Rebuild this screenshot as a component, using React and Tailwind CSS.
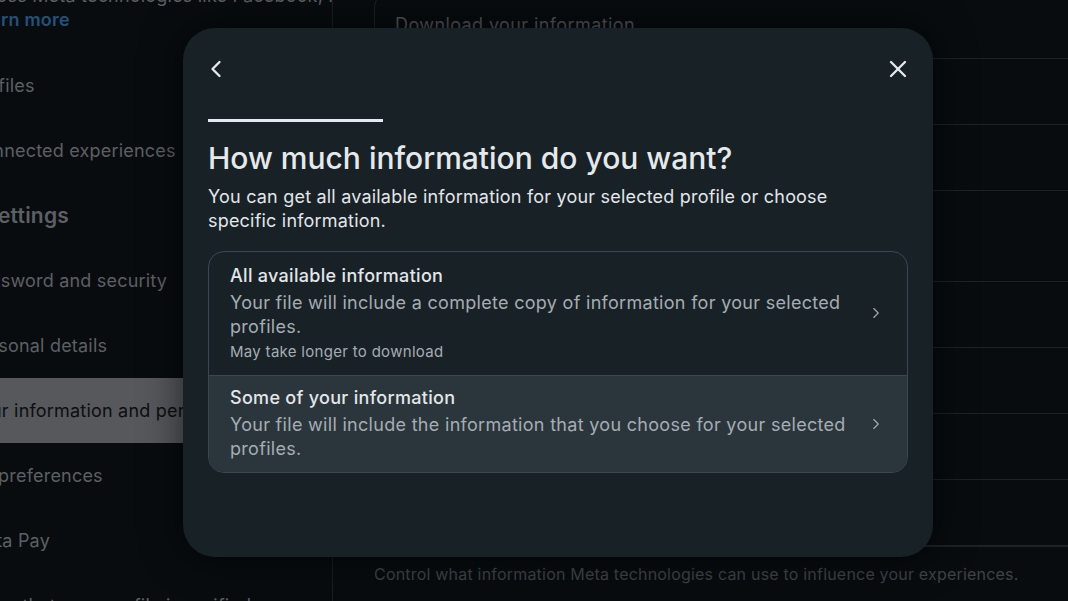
import { ChevronLeft, ChevronRight, X } from "lucide-react";

const sideItems = [
  { label: "Profiles" },
  { label: "Connected experiences" },
  { label: "Account settings", heading: true },
  { label: "Password and security" },
  { label: "Personal details" },
  { label: "Your information and permissions", active: true },
  { label: "Ad preferences" },
  { label: "Meta Pay" },
  { label: "Show that your profile is verified" },
];

const rowHeights = ["h-[66px]", "h-[66px]", "h-[91px]", "h-[66px]", "h-[66px]", "h-[66px]", "h-[66px]"];

function Sidebar() {
  return (
    <aside className="w-[333px] shrink-0 h-full overflow-hidden border-r border-[#1a1e21]">
      <div className="-ml-[31px] -mt-[16px] tracking-[0.2px]">
        <p className="text-[18px] leading-[24px] text-[#5c6064] whitespace-nowrap">
          across Meta technologies like Facebook, Instagram and Meta
        </p>
        <p className="text-[18px] leading-[24px] font-semibold text-[#24517a]">Learn more</p>
        <ul className="mt-[21px]">
          {sideItems.map((item) => (
            <li
              key={item.label}
              className={`h-[65px] flex items-center whitespace-nowrap ${
                item.active ? "bg-[#56585c] text-[#0c0e10]" : "text-[#5c6064]"
              } ${item.heading ? "-ml-[75px] text-[21px] font-semibold" : "text-[18px]"}`}
            >
              {item.label}
            </li>
          ))}
        </ul>
      </div>
    </aside>
  );
}

function BackgroundPanel() {
  return (
    <main className="flex-1 h-full overflow-hidden pl-[41px] flex flex-col">
      <div className="-mt-[10px] -mr-[40px] rounded-tl-[18px] border border-[#1d2226]">
        <div className="h-[68px] flex items-end pb-[20px] pl-[20px] text-[18px] tracking-[0.4px] text-[#50555a] border-b border-[#1d2226]">
          Download your information
        </div>
        {rowHeights.map((h, i) => (
          <div key={i} className={`${h} border-b border-[#1d2226]`} />
        ))}
      </div>
      <p className="mt-[15px] text-[16px] tracking-[0.2px] text-[#3e4347] whitespace-nowrap">
        Control what information Meta technologies can use to influence your experiences.
      </p>
    </main>
  );
}

function Option({ title, desc, note, shaded }) {
  return (
    <button
      className={`w-full flex items-center text-left pl-[21px] pr-[22px] tracking-[0.3px] ${
        shaded ? "bg-[#2b363c] pt-[10px] pb-[11px]" : "pt-[12px] pb-[13px]"
      }`}
    >
      <div className="flex-1">
        <div className="text-[18px] leading-[24px] font-medium text-[#e3e6ea]">{title}</div>
        <div className="mt-[3px] text-[18px] leading-[24px] text-[#a5adb3]">{desc}</div>
        {note && <div className="mt-[3px] text-[15px] leading-[20px] text-[#a5adb3]">{note}</div>}
      </div>
      <ChevronRight size={18} strokeWidth={1.5} className="text-[#a5adb3] ml-[16px] shrink-0" />
    </button>
  );
}

function Modal() {
  return (
    <div className="absolute left-[183px] top-[28px] w-[750px] h-[529px] rounded-[32px] bg-[#182126] shadow-[0_0_40px_rgba(0,0,0,0.6)] px-[25px]">
      <div className="flex items-center justify-between pt-[16px] h-[66px]">
        <ChevronLeft size={28} strokeWidth={2} className="text-[#e6e9ec] -ml-[6px]" />
        <X size={28} strokeWidth={2} className="text-[#e6e9ec] -mr-[4px]" />
      </div>
      <div className="mt-[25px] h-[3px] w-[175px] bg-[#e6e9ec]" />
      <h2 className="mt-[19px] text-[30px] leading-[34px] font-medium text-[#e6e9ec]">
        How much information do you want?
      </h2>
      <p className="mt-[10px] max-w-[640px] text-[18px] leading-[24px] tracking-[0.2px] text-[#e3e6ea]">
        You can get all available information for your selected profile or choose specific information.
      </p>
      <div className="mt-[18px] rounded-[16px] border border-[#3b474f] overflow-hidden">
        <Option
          title="All available information"
          desc="Your file will include a complete copy of information for your selected profiles."
          note="May take longer to download"
        />
        <div className="border-t border-[#3b474f]" />
        <Option
          shaded
          title="Some of your information"
          desc="Your file will include the information that you choose for your selected profiles."
        />
      </div>
    </div>
  );
}

export default function App() {
  return (
    <div
      className="relative w-[1068px] h-[601px] overflow-hidden bg-[#080c0f] flex"
      style={{ fontFamily: "Inter, 'Noto Sans', sans-serif" }}
    >
      <Sidebar />
      <BackgroundPanel />
      <Modal />
    </div>
  );
}
